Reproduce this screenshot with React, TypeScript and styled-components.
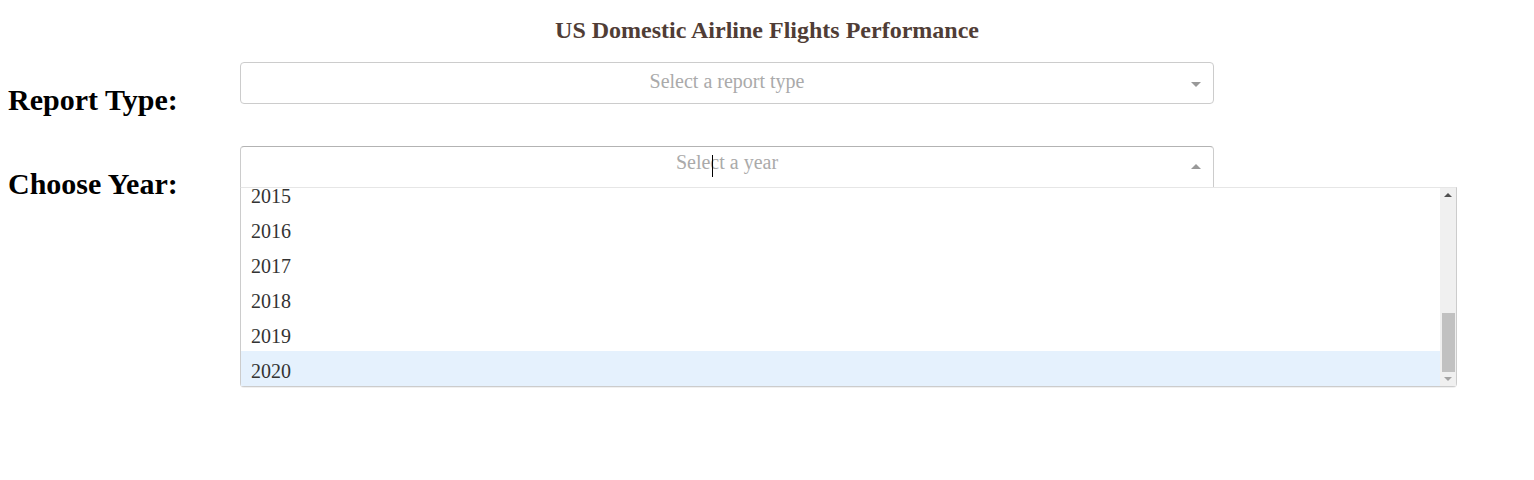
import React, { useLayoutEffect, useRef } from 'react';
import styled, { createGlobalStyle } from 'styled-components';

const GlobalStyle = createGlobalStyle`
  html, body, #root {
    height: 100%;
  }
  body {
    margin: 0;
    background: #fff;
    font-family: "Liberation Serif", "Times New Roman", serif;
  }
`;

const Page = styled.div`
  box-sizing: border-box;
  min-height: 100%;
  padding: 8px;
`;

const Title = styled.h1`
  margin: 8px 0 18px;
  text-align: center;
  color: #503d36;
  font-size: 24px;
  line-height: 28px;
  font-weight: bold;
`;

const Row = styled.div`
  display: flex;
  align-items: flex-start;
`;

const Label = styled.h2`
  flex: none;
  width: 232px;
  margin: 22px 0 30px;
  font-size: 30px;
  line-height: 32px;
  font-weight: bold;
  color: #000;
`;

const SelectWrap = styled.div`
  position: relative;
  width: 974px;
  flex: none;
`;

const Control = styled.div<{ $open?: boolean }>`
  position: relative;
  box-sizing: border-box;
  height: 42px;
  display: flex;
  align-items: center;
  border: 1px solid #ccc;
  border-color: ${p => (p.$open ? '#b3b3b3 #ccc #d9d9d9' : '#ccc')};
  border-radius: ${p => (p.$open ? '4px 4px 0 0' : '4px')};
  background: #fff;
`;

const Placeholder = styled.div<{ $open?: boolean }>`
  flex: 1;
  text-align: center;
  font-size: 20px;
  line-height: 34px;
  margin-top: ${p => (p.$open ? '-10px' : '-4px')};
  color: #aaa;
  padding-left: 30px;
`;

const ArrowZone = styled.span`
  flex: none;
  width: 25px;
  padding-right: 5px;
  display: flex;
  justify-content: center;
`;

const Arrow = styled.span<{ $up?: boolean }>`
  display: inline-block;
  width: 0;
  height: 0;
  border-style: solid;
  border-width: ${p => (p.$up ? '0 5px 5px' : '5px 5px 2.5px')};
  border-color: ${p => (p.$up ? 'transparent transparent #999' : '#999 transparent transparent')};
  margin-top: ${p => (p.$up ? '-2px' : '4px')};
`;

const Caret = styled.span`
  position: absolute;
  left: 471px;
  top: 8px;
  width: 1px;
  height: 22px;
  background: #000;
`;

const Menu = styled.div`
  position: absolute;
  top: 100%;
  left: 0;
  margin-top: -1px;
  width: 1217px;
  box-sizing: border-box;
  height: 200px;
  display: flex;
  background: #fff;
  border: 1px solid #ccc;
  border-top-color: #e6e6e6;
  border-radius: 0 0 4px 4px;
  box-shadow: 0 1px 0 rgba(0, 0, 0, 0.06);
  z-index: 2;
`;

const OptionList = styled.div`
  flex: 1;
  overflow-y: scroll;
  scrollbar-width: none;
  &::-webkit-scrollbar {
    display: none;
  }
`;

const Option = styled.div<{ $focused?: boolean }>`
  box-sizing: border-box;
  height: 35px;
  padding: 5px 10px 0;
  display: flex;
  align-items: center;
  font-size: 20px;
  color: #333;
  background: ${p => (p.$focused ? '#e5f1fd' : '#fff')};
`;

const ScrollBar = styled.div`
  flex: none;
  width: 16px;
  display: flex;
  flex-direction: column;
  background: #f0f0f0;
`;

const ScrollButton = styled.div<{ $down?: boolean; $disabled?: boolean }>`
  flex: none;
  height: 14px;
  display: flex;
  align-items: center;
  justify-content: center;
  &::after {
    content: '';
    width: 0;
    height: 0;
    border-style: solid;
    border-width: ${p => (p.$down ? '4px 4px 0' : '0 4px 4px')};
    border-color: ${p => {
      const c = p.$disabled ? '#a3a3a3' : '#505050';
      return p.$down ? `${c} transparent transparent` : `transparent transparent ${c}`;
    }};
  }
`;

const Track = styled.div`
  flex: 1;
  display: flex;
  flex-direction: column;
  justify-content: flex-end;
`;

const Thumb = styled.div`
  height: 59px;
  margin: 0 1px 0 2px;
  background: #c1c1c1;
`;

const years = Array.from({ length: 16 }, (_, i) => 2005 + i);

const App: React.FC = () => {
  const listRef = useRef<HTMLDivElement>(null);

  useLayoutEffect(() => {
    if (listRef.current) {
      listRef.current.scrollTop = listRef.current.scrollHeight;
    }
  }, []);

  return (
    <Page>
      <GlobalStyle />
      <Title>US Domestic Airline Flights Performance</Title>

      <Row>
        <Label>Report Type:</Label>
        <SelectWrap>
          <Control>
            <Placeholder>Select a report type</Placeholder>
            <ArrowZone>
              <Arrow />
            </ArrowZone>
          </Control>
        </SelectWrap>
      </Row>

      <Row>
        <Label>Choose Year:</Label>
        <SelectWrap>
          <Control $open>
            <Placeholder $open>Select a year</Placeholder>
            <Caret />
            <ArrowZone>
              <Arrow $up />
            </ArrowZone>
          </Control>
          <Menu>
            <OptionList ref={listRef}>
              {years.map(y => (
                <Option key={y} $focused={y === 2020}>
                  {y}
                </Option>
              ))}
            </OptionList>
            <ScrollBar>
              <ScrollButton />
              <Track>
                <Thumb />
              </Track>
              <ScrollButton $down $disabled />
            </ScrollBar>
          </Menu>
        </SelectWrap>
      </Row>
    </Page>
  );
};

export default App;
